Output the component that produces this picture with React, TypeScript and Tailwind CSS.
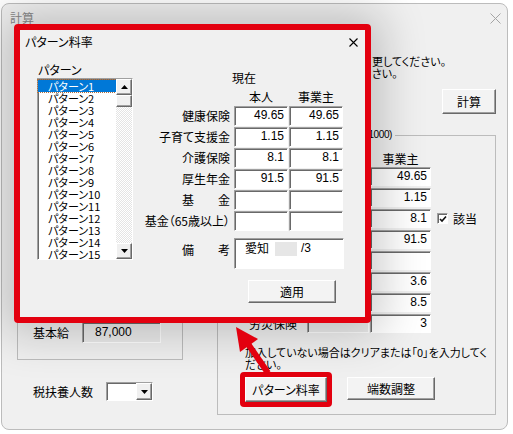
import React from "react";

const jp = "font-['Noto_Sans_CJK_JP',sans-serif] [font-feature-settings:'palt']";
const latin = "font-['Liberation_Sans',sans-serif]";

const sunken =
  "border border-t-[#a0a0a0] border-l-[#a0a0a0] border-b-white border-r-white shadow-[inset_1px_1px_0_#696969]";
const raised =
  "border border-t-white border-l-white border-b-[#696969] border-r-[#696969] shadow-[inset_-1px_-1px_0_#a0a0a0]";

const dialogRows = [
  { label: "健康保険", a: "49.65", b: "49.65" },
  { label: "子育て支援金", a: "1.15", b: "1.15" },
  { label: "介護保険", a: "8.1", b: "8.1" },
  { label: "厚生年金", a: "91.5", b: "91.5" },
  { label: "基　　金", a: "", b: "" },
  { label: "基金（65歳以上）", a: "", b: "" },
];

// rows of the main window; everything left of x=371 sits under the dialog, so only the last label shows
const mainRows = [
  { id: 1, label: "", b: "49.65" },
  { id: 2, label: "", b: "1.15" },
  { id: 3, label: "", b: "8.1", check: true },
  { id: 4, label: "", b: "91.5" },
  { id: 5, label: "", b: "" },
  { id: 6, label: "", b: "3.6", off: true },
  { id: 7, label: "", b: "8.5" },
  { id: 8, label: "労災保険", b: "3", off: true },
];

const patterns = Array.from({ length: 15 }, (_, i) => `パターン${i + 1}`);

function Tri({ down }: { down?: boolean }) {
  return (
    <svg width="7" height="4" viewBox="0 0 7 4">
      <polygon points={down ? "0,0 7,0 3.5,4" : "0,4 7,4 3.5,0"} fill="#000" />
    </svg>
  );
}

function ListBox() {
  return (
    <div className={`mt-[2px] flex h-[182px] w-[96px] bg-white ${sunken}`}>
      <div className="flex-1 pt-[1px]">
        {patterns.map((p, i) => (
          <div
            key={p}
            className={`h-[12px] pl-[10px] text-[11px] leading-[12px] whitespace-nowrap ${
              i === 0 ? "bg-[#0078d7] text-white outline-1 outline-dotted outline-[#b07040]" : ""
            }`}
          >
            {p}
          </div>
        ))}
      </div>
      <div className="flex w-[16px] flex-col">
        <div className={`flex h-[16px] items-center justify-center bg-[#f0f0f0] ${raised}`}>
          <Tri />
        </div>
        <div className={`h-[12px] bg-[#f0f0f0] ${raised}`} />
        <div className="flex-1 bg-[repeating-conic-gradient(#ffffff_0%_25%,#e4e4e4_0%_50%)] bg-size-[2px_2px]" />
        <div className={`flex h-[16px] items-center justify-center bg-[#f0f0f0] ${raised}`}>
          <Tri down />
        </div>
      </div>
    </div>
  );
}

function PatternDialog() {
  return (
    <div className="flex h-[287px] w-[345px] flex-col bg-[#f0f0f0]">
      <div className="flex h-[24px] items-center justify-between pl-[5px] pr-[7px]">
        <span className="text-[12px] leading-none">パターン料率</span>
        <svg width="9" height="9" viewBox="0 0 9 9">
          <path d="M0.5 0.5L8.5 8.5M8.5 0.5L0.5 8.5" stroke="#000" strokeWidth="1.1" />
        </svg>
      </div>
      <div className="flex">
        <div className="w-[113px] pt-[10px] pl-[17px]">
          <div className="pl-[1px] text-[12px] leading-[12px]">パターン</div>
          <ListBox />
        </div>
        <div className="flex flex-col text-[12px]">
          <div className="mt-[18px] ml-[99px] leading-[12px]">現在</div>
          <div className="mt-[7px] flex h-[12px] leading-[12px]">
            <div className="w-[101px]" />
            <div className="w-[54px] text-center">本人</div>
            <div className="ml-[1px] w-[54px] text-center">事業主</div>
          </div>
          <div className="mt-[3px] flex flex-col gap-[1px]">
            {dialogRows.map((r) => (
              <div key={r.label} className="flex h-[20px] items-center">
                <div className="w-[101px] pr-[4px] text-right whitespace-nowrap">{r.label}</div>
                <div className={`h-full w-[54px] bg-white pr-[3px] text-right text-[12px] leading-[17px] ${latin} ${sunken}`}>
                  {r.a}
                </div>
                <div className={`ml-[1px] h-full w-[54px] bg-white pr-[3px] text-right text-[12px] leading-[17px] ${latin} ${sunken}`}>
                  {r.b}
                </div>
              </div>
            ))}
          </div>
          <div className="mt-[7px] flex h-[31px]">
            <div className="w-[101px] pt-[6px] pr-[4px] text-right leading-[12px]">備　　考</div>
            <div className={`flex w-[110px] items-start bg-white pt-[2px] pl-[10px] leading-[14px] ${sunken}`}>
              <span>愛知</span>
              <span className="mt-[1px] ml-[6px] h-[14px] w-[22px] bg-[#e6e6e6]" />
              <span className={`ml-[4px] text-[12px] ${latin}`}>/3</span>
            </div>
          </div>
          <button className={`mt-[11px] ml-[115px] h-[23px] w-[88px] bg-[#f3f3f3] text-[12px] ${raised}`}>
            適用
          </button>
        </div>
      </div>
    </div>
  );
}

function MainWindow() {
  return (
    <div className="mt-[3px] ml-[1px] h-[427px] w-[507px] overflow-hidden rounded-[8px] border border-[#bcbcbc] bg-[#f0f0f0]">
      <div className="flex h-[28px] items-center justify-between pr-[6px] pl-[8px]">
        <span className="text-[12px] leading-none text-[#8a8a8a]">計算</span>
        <svg width="11" height="11" viewBox="0 0 11 11">
          <path d="M0.5 0.5L10.5 10.5M10.5 0.5L0.5 10.5" stroke="#a4a4a4" strokeWidth="1" />
        </svg>
      </div>
      <div className="flex gap-[34px] pl-[15px] text-[12px]">
        <div className="flex w-[166px] flex-col">
          <div className="mt-[60px] flex h-[268px] flex-col justify-end border border-[#bcbcbc] pb-[16px] pl-[15px]">
            <div className="flex items-center gap-[13px]">
              <span className="leading-[12px]">基本給</span>
              <div className={`h-[21px] w-[79px] bg-[#ebebeb] pt-[3px] pl-[12px] text-[12px] leading-[12px] ${latin} ${sunken}`}>
                87,000
              </div>
            </div>
          </div>
          <div className="mt-[22px] flex items-center gap-[13px] pl-[16px]">
            <span className="leading-[12px]">税扶養人数</span>
            <div className={`flex h-[19px] w-[47px] justify-end bg-white ${sunken}`}>
              <div className={`flex h-full w-[16px] items-center justify-center bg-[#f0f0f0] ${raised}`}>
                <Tri down />
              </div>
            </div>
          </div>
        </div>
        <div className="flex w-[279px] flex-col">
          <div className="mt-[23px] ml-[155px] text-[11px] leading-[12px] whitespace-nowrap">
            <div>更してください。</div>
            <div>さい。</div>
          </div>
          <button className={`mt-[10px] h-[25px] w-[54px] self-end bg-[#f3f3f3] text-[12px] ${raised}`}>
            計算
          </button>
          <div className="relative mt-[21px] h-[280px] border border-[#bcbcbc] pt-[16px]">
            <span
              className={`absolute -top-[8px] right-[100px] bg-[#f0f0f0] px-[3px] text-[10px] leading-[14px] tracking-[-0.4px] whitespace-nowrap ${latin}`}
            >
              /1000)
            </span>
            <div className="flex h-[14px] leading-[14px]">
              <div className="w-[152px]" />
              <div className="w-[61px] text-center">事業主</div>
            </div>
            <div className="mt-[1px] flex flex-col gap-[2px]">
              {mainRows.map((r) => (
                <div key={r.id} className="flex h-[19px] items-center">
                  <div className="w-[82px] pr-[3px] text-right leading-[12px] whitespace-nowrap">{r.label}</div>
                  <div className={`ml-[7px] h-full w-[62px] ${sunken} ${r.off ? "bg-[#ececec]" : "bg-white"}`} />
                  <div className={`ml-[1px] h-full w-[61px] bg-white pr-[3px] text-right text-[12px] leading-[17px] ${latin} ${sunken}`}>
                    {r.b}
                  </div>
                  {r.check && (
                    <div className="ml-[6px] flex items-center gap-[5px]">
                      <div className={`flex h-[11px] w-[11px] items-center justify-center bg-white ${sunken}`}>
                        <svg width="8" height="8" viewBox="0 0 8 8">
                          <path d="M1 4L3 6L7 1.5" stroke="#111" strokeWidth="1.6" fill="none" />
                        </svg>
                      </div>
                      <span className="leading-[12px]">該当</span>
                    </div>
                  )}
                </div>
              ))}
            </div>
            <div className="mt-[13px] ml-[27px] text-[11px] leading-[12px] whitespace-nowrap">
              加入していない場合はクリアまたは「0」を入力してく
              <br />
              ださい。
            </div>
            <div className="mt-[2px] ml-[22px] flex items-start">
              <div className="rounded-[4px] border-[5px] border-[#e3000f]">
                <button className={`block h-[25px] w-[82px] bg-[#f3f3f3] text-[12px] ${raised}`}>パターン料率</button>
              </div>
              <button className={`mt-[5px] ml-[15px] h-[23px] w-[88px] bg-[#f3f3f3] text-[12px] ${raised}`}>
                端数調整
              </button>
            </div>
          </div>
        </div>
      </div>
    </div>
  );
}

function Arrow() {
  return (
    <svg className="pointer-events-none absolute top-0 left-0" width="513" height="434" viewBox="0 0 513 434">
      <line x1="268" y1="373" x2="246" y2="341" stroke="#e3000f" strokeWidth="6" />
      <polygon points="236,327 258,339 240,352" fill="#e3000f" />
    </svg>
  );
}

export default function App() {
  return (
    <div className={`relative h-[434px] w-[513px] overflow-hidden bg-white text-black ${jp}`}>
      <MainWindow />
      <div className="absolute top-[24px] left-[14px] rounded-[4px] border-[6px] border-[#e3000f] shadow-[0_0_45px_12px_rgba(0,0,0,0.2)]">
        <PatternDialog />
      </div>
      <Arrow />
    </div>
  );
}
